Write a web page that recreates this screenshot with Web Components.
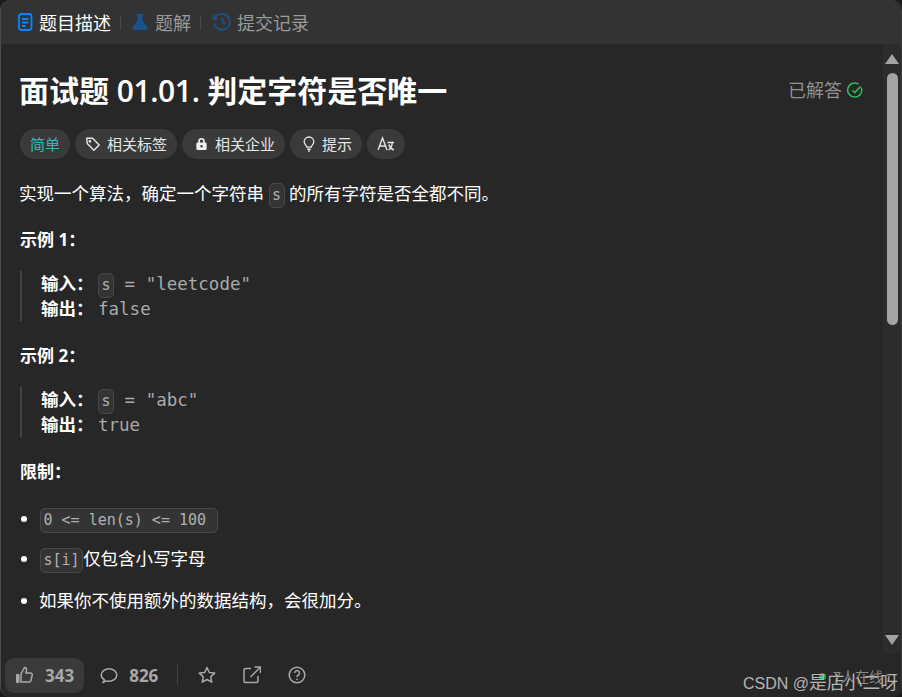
<!DOCTYPE html>
<html lang="zh"><head><meta charset="utf-8"><style>
html,body{margin:0;height:100%;background:#1a1a1a;overflow:hidden}
body{font-family:"Open Sans","Noto Sans CJK SC",sans-serif;color:#fff}
</style></head><body>
<lc-panel>
<lc-tabs slot="tabs"></lc-tabs>
<lc-problem slot="main"></lc-problem>
<lc-scrollbar slot="scroll"></lc-scrollbar>
<lc-footer slot="footer"></lc-footer>
</lc-panel>
<template id="t-panel"><style>
:host{display:grid;width:902px;height:697px;box-sizing:border-box;background:#272727;border-radius:10px;border-left:1px solid #4a4a4a;border-right:1px solid #3a3a3a;overflow:hidden;position:relative;
grid-template-columns:minmax(0,1fr) 18px;grid-template-rows:44px 609px 44px}
::slotted([slot=tabs]){grid-column:1/3}
::slotted([slot=footer]){grid-column:1/3}
.wm{position:absolute;left:742px;top:669px;font:16px/24px "Liberation Sans",sans-serif;color:#b4b4b4;white-space:nowrap}
.wm span{font:17.800px/24px "Noto Sans CJK SC",sans-serif}
</style><slot name="tabs"></slot><slot name="main"></slot><slot name="scroll"></slot><slot name="footer"></slot><div class="wm">CSDN @<span>是店小二呀</span></div></template>
<template id="t-tabs"><style>
:host{display:flex;align-items:center;background:#333;padding-left:16px;font-size:18px;color:#9a9a9a;white-space:nowrap;gap:0}
.t{display:flex;align-items:center;gap:5px}
.t2{gap:7px}
.t3{gap:6px}
.on{color:#fff}
.s{width:1px;height:15px;background:#484848;margin:0 11px 0 9px}
.s2{margin:0 11px 0 9px}
svg{display:block}
</style>
<div class="t on"><svg width="17" height="18" viewBox="0 0 17 18" fill="none" stroke="#0a84ff" stroke-width="1.800"><rect x="2" y="1" width="12.500" height="16" rx="2.400"/><path d="M5 6h6.500M5 9.500h6.500M5 13h3.500"/></svg><span>题目描述</span></div>
<div class="s"></div>
<div class="t t2"><svg width="16" height="18" viewBox="0 0 16 18"><path d="M4.500 1h7v1.600H10.500v4.400l4.700 7.500c.7 1.200-.1 2.500-1.500 2.500H2.300c-1.400 0-2.200-1.300-1.500-2.500L5.500 7V2.600h-1z" fill="#17548f"/></svg><span>题解</span></div>
<div class="s s2"></div>
<div class="t t3"><svg width="19" height="18" viewBox="0 0 19 18" fill="none" stroke="#17548f" stroke-width="1.700"><path d="M3 4.500A8 8 0 1 1 2.200 11"/><path d="M1.500 1.500v4.200h4.200"/><path d="M10.500 5v4.500l3 1.800"/></svg><span>提交记录</span></div>
</template>
<template id="t-pill"><style>
:host{display:inline-flex;align-items:center;gap:6px;height:30px;padding:0 10px;border-radius:15px;background:#3a3a3a;color:#e6e6e6;font-size:15px;box-sizing:border-box;white-space:nowrap}
</style><slot></slot></template>
<template id="t-code"><style>
:host{display:inline-block;font:15px/20px "DejaVu Sans Mono","Noto Sans CJK SC",monospace;color:#aeb0b2;background:#343434;border:1px solid #484848;border-radius:5px;padding:1.500px 2.500px;vertical-align:baseline}
</style><slot></slot></template>
<template id="t-example"><style>
:host{display:block;margin:19px 0 0 0;border-left:2px solid #444;padding-left:19px;font:17.500px/25px "DejaVu Sans Mono","Noto Sans CJK SC",monospace;color:#a8aaac;height:50px}
b{font:700 17.500px/25px "Open Sans","Noto Sans CJK SC",sans-serif;color:#fff;display:inline-block;width:57px}
div{height:25px;white-space:nowrap}
</style><div><b><slot name="k1"></slot></b><slot name="v1"></slot></div><div><b>输出：</b><slot name="v2"></slot></div></template>
<template id="t-problem"><style>
:host{display:block;padding:26px 19px 0 19px;font-size:17.500px;line-height:24px;color:#fff;overflow:hidden}
.head{display:flex;align-items:center;justify-content:space-between;height:42px}
h1{margin:0 0 0 -1px;font-size:30px;font-weight:700;line-height:42px;white-space:nowrap}
h1 span{font-weight:600;letter-spacing:-.4px}
.done{display:flex;align-items:center;gap:5px;color:#8f9193;font-size:18px;margin-top:-2px}
.pills{display:flex;gap:5px;margin-top:17px}
.easy{color:#2cbbb5}
p{margin:0;white-space:nowrap}
.lead{margin:22px 0 0 -1px;height:26px}
.h{font-weight:700;font-size:17px;margin-top:23px}
.h.first{margin-top:21px}
ul{margin:22px 0 0;padding:0 0 0 19px;list-style:none}
li{position:relative;height:25px;margin-bottom:16px;white-space:nowrap;line-height:25px}
li.nudge{margin-bottom:15px}
li.tight{margin-bottom:17px}
li lc-code{margin-left:1px}
li::before{content:"";position:absolute;left:-18px;top:10px;width:6px;height:6px;background:#fff;border-radius:50%}
svg{display:block}
</style>
<div class="head"><h1>面试题 <span>01.01.</span> 判定字符是否唯一</h1>
<div class="done"><span>已解答</span><svg width="17" height="17" viewBox="0 0 17 17" fill="none" stroke="#2cbb5d" stroke-width="1.500"><path d="M14.200 5.500A7 7 0 1 1 11.500 2.200"/><path d="M5.500 8.300l2.300 2.300 5.700-6"/></svg></div></div>
<div class="pills">
<lc-pill><span class="easy">简单</span></lc-pill>
<lc-pill><svg width="16" height="16" viewBox="0 0 18 18" fill="none" stroke="#e6e6e6" stroke-width="1.600"><path d="M2 2.500h6.500l7.500 7.500-6 6L2.500 8.500z" stroke-linejoin="round"/><circle cx="5.500" cy="6" r=".8" fill="#e6e6e6"/></svg>相关标签</lc-pill>
<lc-pill><span style="display:inline-flex;margin-left:2px"><svg width="15" height="16" viewBox="0 0 16 16" fill="#eee"><path fill-rule="evenodd" d="M4.500 6.500V5a3.500 3.500 0 0 1 7 0v1.500h.5a1.500 1.500 0 0 1 1.500 1.500v5a1.500 1.500 0 0 1-1.500 1.500H4A1.500 1.500 0 0 1 2.500 13V8A1.500 1.500 0 0 1 4 6.500zM6.300 6.500h3.400V5a1.700 1.700 0 0 0-3.400 0zM8 9a1.300 1.300 0 1 0 0 2.600A1.300 1.300 0 0 0 8 9z"/></svg></span>相关企业</lc-pill>
<lc-pill><span style="display:inline-flex;margin-left:2px"><svg width="14" height="18" viewBox="0 0 16 18" fill="none" stroke="#e6e6e6" stroke-width="1.500"><path d="M5.500 12.500C5.300 10.500 2.500 9.500 2.500 6.500a5.500 5.500 0 0 1 11 0c0 3-2.800 4-3 6z"/><path d="M6 15h4M7 17h2"/></svg></span>提示</lc-pill>
<lc-pill><svg width="18" height="16" viewBox="0 0 18 16" fill="none" stroke="#e6e6e6" stroke-width="1.400"><path d="M1 14L5.500 2 10 14M2.800 10h5.400"/><path d="M10.500 6.500h6.500M11.500 14c2.500-1.500 3.500-3.500 3.800-7.500M11.800 8.500c.8 2.500 2.500 4.500 5 5.500"/></svg></lc-pill>
</div>
<p class="lead">实现一个算法，确定一个字符串 <lc-code>s</lc-code> 的所有字符是否全都不同。</p>
<p class="h first">示例 1：</p>
<lc-example><span slot="k1">输入：</span><span slot="v1"><lc-code>s</lc-code> = "leetcode"</span><span slot="v2">false</span></lc-example>
<p class="h">示例 2：</p>
<lc-example><span slot="k1">输入：</span><span slot="v1"><lc-code>s</lc-code> = "abc"</span><span slot="v2">true</span></lc-example>
<p class="h">限制：</p>
<ul><li class="nudge"><lc-code style="width:171px">0 &lt;= len(s) &lt;= 100</lc-code></li>
<li class="tight"><lc-code>s[i]</lc-code>仅包含小写字母</li>
<li>如果你不使用额外的数据结构，会很加分。</li></ul>
</template>
<template id="t-scroll"><style>
:host{display:flex;flex-direction:column;align-items:center;background:#2c2c2c;padding-top:10px;height:609px;box-sizing:border-box}
.a{width:0;height:0;border:7px solid transparent;border-top:0;border-bottom:10px solid #a3a3a3}
.d{border-bottom:0;border-top:10px solid #a3a3a3;margin-top:auto;margin-bottom:8px}
.th{width:11px;height:252px;margin-top:9px;background:#a3a3a3;border-radius:6px}
</style><div class="a"></div><div class="th"></div><div class="a d"></div></template>
<template id="t-footer"><style>
:host{display:flex;align-items:center;background:#272727;padding-left:4px;font-size:17px;font-weight:700;color:#a8a8a8;white-space:nowrap;position:relative}
.like{display:flex;align-items:center;gap:11px;height:35px;background:#3a3a3a;border-radius:9px;padding:0 10px}
.c{display:flex;align-items:center;gap:11px;margin-left:16px}
.sep{width:1px;height:20px;background:#444;margin:0 20px 0 19px}
.ic{margin-right:27px}
svg{display:block}
.on{position:absolute;left:832px;top:14px;font-weight:400;font-size:14px;line-height:19px;color:#8a8a8a}
.dot{position:absolute;left:818px;top:20px;width:7px;height:7px;border-radius:50%;background:#22a83d}
</style>
<div class="like"><svg width="19" height="18" viewBox="0 0 19 18" fill="none" stroke="#a8a8a8" stroke-width="1.500"><path d="M6 8l3.500-6.500c1.500 0 2.300 1 2 2.500l-.6 3h4.600c1.300 0 2 1 1.700 2.200l-1.200 5.300c-.2 1-1 1.500-2 1.500H6z"/><rect x="1" y="8" width="3.500" height="9" rx="1" fill="#a8a8a8" stroke="none"/></svg><span>343</span></div>
<div class="c"><svg width="18" height="18" viewBox="0 0 18 18" fill="none" stroke="#a8a8a8" stroke-width="1.500"><path d="M4.500 13.800C2.500 12.600 1.200 10.900 1.200 9c0-3.500 3.500-6.200 7.800-6.200s7.800 2.700 7.800 6.200-3.500 6.200-7.800 6.200c-.8 0-1.600-.1-2.400-.3L2.800 16.500c.8-.8 1.400-1.700 1.700-2.700z" stroke-linejoin="round"/></svg><span>826</span></div>
<div class="sep"></div>
<svg class="ic" width="18" height="18" viewBox="0 0 18 18" fill="none" stroke="#a8a8a8" stroke-width="1.500" stroke-linejoin="round"><path d="M9 1.500l2.300 5 5.400.6-4 3.700 1.100 5.400L9 13.500l-4.800 2.700 1.100-5.400-4-3.700 5.400-.6z"/></svg>
<svg class="ic" width="18" height="18" viewBox="0 0 18 18" fill="none" stroke="#a8a8a8" stroke-width="1.500"><path d="M8 2.500H2.500a1.500 1.500 0 0 0-1.500 1.500v11a1.500 1.500 0 0 0 1.500 1.500h11a1.500 1.500 0 0 0 1.500-1.500V10"/><path d="M7.500 11L17 1.500M11.500 1h6v6"/></svg>
<svg width="18" height="18" viewBox="0 0 18 18" fill="none" stroke="#a8a8a8" stroke-width="1.500"><circle cx="9" cy="9" r="7.800"/><path d="M6.700 7a2.400 2.400 0 1 1 3.700 2c-.9.600-1.400 1-1.400 2"/><circle cx="9" cy="13.300" r=".9" fill="#a8a8a8" stroke="none"/></svg>
<div class="dot"></div><div class="on">7人在线</div>
</template>
<script>
for (const [tag,id] of [["lc-panel","t-panel"],["lc-tabs","t-tabs"],["lc-pill","t-pill"],["lc-code","t-code"],["lc-example","t-example"],["lc-problem","t-problem"],["lc-scrollbar","t-scroll"],["lc-footer","t-footer"]]) {
  customElements.define(tag, class extends HTMLElement {
    constructor(){super();this.attachShadow({mode:"open"}).append(document.getElementById(id).content.cloneNode(true));}
  });
}
</script>
</body></html>
